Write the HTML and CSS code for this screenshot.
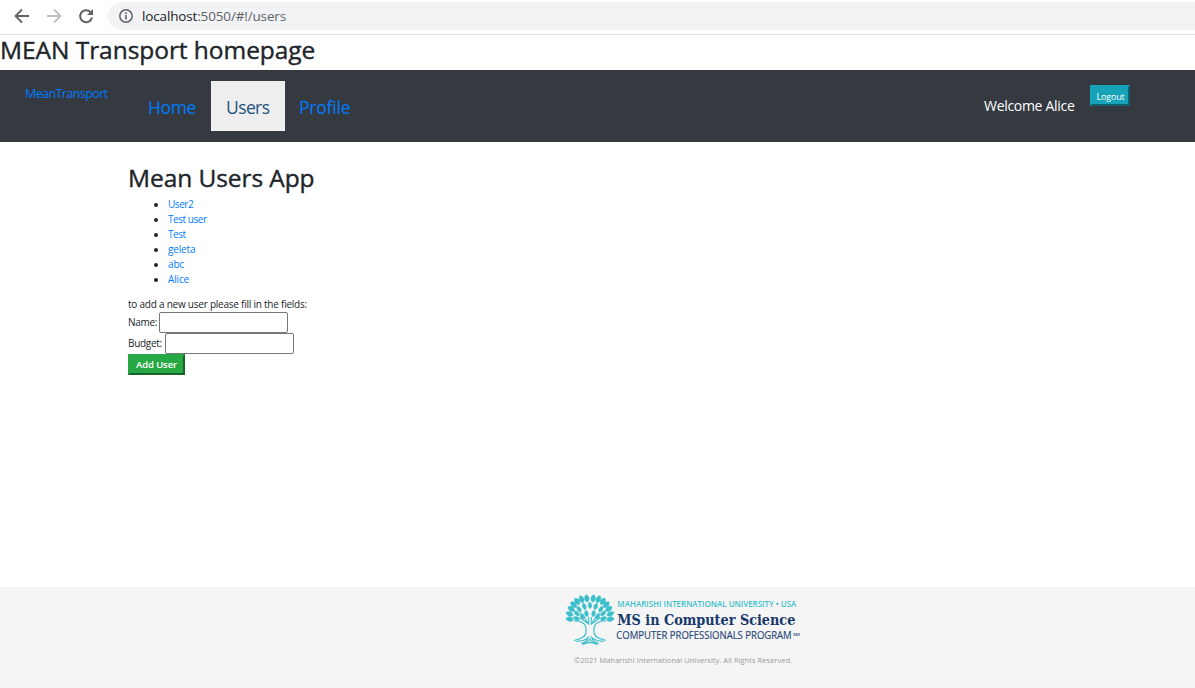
FILE: index.html
```html
<!DOCTYPE html>
<html lang="en">
<head>
<meta charset="utf-8">
<title>MEAN Transport</title>
<link rel="stylesheet" href="styles.css">
</head>
<body>
<div class="browser-bar">
  <svg class="nav-icons" width="100" height="32" viewBox="0 0 100 32" fill="none" stroke-width="1.8">
    <path d="M29 16H16M22 9.5L15.500 16L22 22.500" stroke="#5f6368"/>
    <path d="M47 16H60M54 9.500L60.500 16L54 22.500" stroke="#bdc1c6"/>
    <path d="M90.600 12.200A6 6 0 1 0 92 17.500" stroke="#5f6368" stroke-width="2"/>
    <path d="M93 9V15H87Z" fill="#5f6368"/>
  </svg>
  <div class="address">
    <svg width="16" height="16" viewBox="0 0 16 16"><circle cx="8" cy="8" r="6.200" fill="none" stroke="#5f6368" stroke-width="1.500"/><path d="M8 7V11.500M8 4.300V5.900" stroke="#5f6368" stroke-width="1.600"/></svg>
    <span class="url"><span class="host">localhost</span>:5050/#!/users</span>
  </div>
</div>
<h1 class="site-title">MEAN Transport homepage</h1>
<nav class="navbar">
  <a class="brand">MeanTransport</a>
  <div class="links">
    <a class="link home">Home</a>
    <a class="link active">Users</a>
    <a class="link profile">Profile</a>
  </div>
  <span class="welcome">Welcome Alice</span>
  <button class="logout">Logout</button>
</nav>
<main class="content">
  <h1 class="page-title">Mean Users App</h1>
  <ul class="users">
    <li><a>User2</a></li>
    <li><a>Test user</a></li>
    <li><a>Test</a></li>
    <li><a>geleta</a></li>
    <li><a>abc</a></li>
    <li><a>Alice</a></li>
  </ul>
  <p class="hint">to add a new user please fill in the fields:</p>
  <div class="field name"><label>Name:</label><input type="text"></div>
  <div class="field budget"><label>Budget:</label><input type="text"></div>
  <button class="add">Add User</button>
</main>
<footer class="footer">
  <svg class="logo" width="240" height="54" viewBox="30 39 720 162">
    <defs>
      <path id="leaf" d="M0 0C-10 -7 -9 -17 0 -24C9 -17 10 -7 0 0Z"/>
      <path id="leaf-s" d="M0 0C-8 -6 -7 -14 0 -21C7 -14 8 -6 0 0Z"/>
    </defs>
    <g fill="#3bbfca" stroke="#3bbfca" stroke-width="1">
      <use href="#leaf" transform="translate(56 119) rotate(-82)"/>
      <use href="#leaf" transform="translate(55 106) rotate(-68)"/>
      <use href="#leaf" transform="translate(59 93) rotate(-58)"/>
      <use href="#leaf" transform="translate(65 82) rotate(-48)"/>
      <use href="#leaf" transform="translate(73 74) rotate(-34)"/>
      <use href="#leaf" transform="translate(84 69) rotate(-22)"/>
      <use href="#leaf" transform="translate(97 67) rotate(-8)"/>
      <use href="#leaf" transform="translate(113 67) rotate(8)"/>
      <use href="#leaf" transform="translate(126 69) rotate(22)"/>
      <use href="#leaf" transform="translate(137 74) rotate(34)"/>
      <use href="#leaf" transform="translate(145 82) rotate(48)"/>
      <use href="#leaf" transform="translate(151 93) rotate(58)"/>
      <use href="#leaf" transform="translate(155 106) rotate(68)"/>
      <use href="#leaf" transform="translate(154 119) rotate(82)"/>
      <use href="#leaf-s" transform="translate(74 119) rotate(-68)"/>
      <use href="#leaf-s" transform="translate(73 107) rotate(-48)"/>
      <use href="#leaf-s" transform="translate(78 96) rotate(-34)"/>
      <use href="#leaf-s" transform="translate(91 89) rotate(-18)"/>
      <use href="#leaf-s" transform="translate(105 86)"/>
      <use href="#leaf-s" transform="translate(119 89) rotate(18)"/>
      <use href="#leaf-s" transform="translate(132 96) rotate(34)"/>
      <use href="#leaf-s" transform="translate(137 107) rotate(48)"/>
      <use href="#leaf-s" transform="translate(136 119) rotate(68)"/>
      <use href="#leaf-s" transform="translate(87 117) rotate(-30)"/>
      <use href="#leaf-s" transform="translate(96 111) rotate(-10)"/>
      <use href="#leaf-s" transform="translate(114 111) rotate(10)"/>
      <use href="#leaf-s" transform="translate(123 117) rotate(30)"/>
    </g>
    <g fill="none" stroke="#3bbfca" stroke-width="3.500" stroke-linecap="round">
      <path d="M58 123C70 121 77 124 85 130C93 136 94 143 93 155C93 169 82 175 59 181"/>
      <path d="M152 123C140 121 133 124 125 130C117 136 116 143 117 155C117 169 128 175 151 181"/>
      <path d="M75 113L101 132V112M135 113L109 132V112M86 109L97 126M124 109L113 126"/>
      <path d="M66 184Q88 183 100 172Q96 185 79 191Q96 192 105 177Q114 192 131 191Q114 185 110 172Q122 183 144 184M86 193Q105 181 124 193M94 188H116"/>
    </g>
    <text class="logo-top" x="187" y="81" textLength="537" lengthAdjust="spacingAndGlyphs">MAHARISHI INTERNATIONAL UNIVERSITY • USA</text>
    <text class="logo-main" x="187" y="134" textLength="534" lengthAdjust="spacingAndGlyphs">MS in Computer Science</text>
    <text class="logo-bottom" x="184" y="177" textLength="526" lengthAdjust="spacingAndGlyphs">COMPUTER PROFESSIONALS PROGRAM</text>
    <text class="logo-mark" x="714" y="167" textLength="21" lengthAdjust="spacingAndGlyphs">SM</text>
  </svg>
  <p class="copyright">©2021 Maharishi International University. All Rights Reserved.</p>
</footer>
</body>
</html>
```
FILE: styles.css
```css
* { box-sizing: border-box; }
body { margin: 0; height: 688px; display: flex; flex-direction: column; overflow: hidden; background: #fff; color: #212529; font: 10px/15px "Open Sans", "Noto Sans", sans-serif; }
h1, p, ul { margin: 0; }
h1 { font-weight: 500; font-size: 24.500px; line-height: 30px; white-space: nowrap; -webkit-text-stroke: 0.400px #212529; }
a { color: #007bff; text-decoration: none; white-space: nowrap; }
button { font-family: inherit; color: #fff; padding: 0; white-space: nowrap; }
.browser-bar { height: 35px; flex: none; display: flex; border-bottom: 1px solid #dadce0; }
.nav-icons { flex: none; margin-right: 8px; }
.address { flex: 1; height: 28px; margin-top: 2px; border-radius: 14px 0 0 14px; background: #f1f3f4; display: flex; align-items: center; padding-left: 10px; gap: 8px; }
.url { font-size: 13.500px; line-height: 18px; color: #5f6368; letter-spacing: -0.150px; }
.host { color: #202124; }
.site-title { height: 35px; flex: none; letter-spacing: -0.050px; }
.navbar { height: 72px; flex: none; background: #343a40; display: flex; align-items: flex-start; padding: 11px 65px 0 25px; }
.brand { width: 108px; font-size: 12.500px; line-height: 18px; padding-top: 4px; letter-spacing: -0.580px; }
.links { display: flex; flex: 1; }
.link { height: 50px; width: 78px; padding-left: 15px; font-size: 17.500px; line-height: 52px; letter-spacing: -0.400px; }
.active { width: 74px; background: #eee; color: #23527c; letter-spacing: -0.600px; }
.profile { padding-left: 14px; letter-spacing: -0.200px; }
.welcome { width: 106px; color: #fff; font-size: 14px; line-height: 20px; padding-top: 15px; white-space: nowrap; letter-spacing: -0.300px; }
.logout { width: 40px; height: 21px; margin-top: 4px; background: #17a2b8; border: 2px solid; border-color: #17a2b8 #0f616e #0f616e #17a2b8; font-size: 9px; line-height: 17px; padding: 1px 0 0 1px; letter-spacing: -0.200px; }
.content { flex: 1; padding: 21px 128px 0; }
.page-title { line-height: 30px; height: 34px; letter-spacing: -0.080px; }
.users { padding-left: 40px; margin-bottom: 10px; }
.users li { height: 15px; line-height: 15px; font-size: 10px; }
.users a { letter-spacing: -0.450px; }
.users li:nth-child(n+4) a { letter-spacing: -0.150px; }
.hint { height: 15px; letter-spacing: -0.230px; white-space: nowrap; }
.field { display: flex; height: 21px; }
.field label { width: 31px; line-height: 21px; letter-spacing: -0.300px; }
.budget label { width: 37px; }
.field input { width: 129px; height: 21px; border: 1px solid #767676; border-radius: 2px; padding: 0; background: #fff; }
.add { display: block; width: 57px; height: 21px; background: #28a745; border: 2px solid; border-color: #28a745 #17612a #17612a #28a745; font-size: 9.500px; font-weight: 600; line-height: 17px; letter-spacing: -0.100px; }
.footer { height: 101px; flex: none; background: #f5f5f5; }
.logo { display: block; overflow: visible; margin: 6px 0 0 565px; font-family: "Open Sans", "Noto Sans", sans-serif; }
.logo-top { font-size: 24px; font-weight: 600; fill: #3bbfca; }
.logo-main { font: bold 45px "DejaVu Serif", serif; fill: #17386b; }
.logo-bottom { font-size: 30px; fill: #2c4877; stroke: #2c4877; stroke-width: 0.500px; }
.logo-mark { font-size: 12px; font-weight: 600; fill: #2c4877; }
.copyright { margin: 7px 0 0 574px; font-size: 7.500px; line-height: 13px; letter-spacing: 0.035px; color: #999; white-space: nowrap; }
```
